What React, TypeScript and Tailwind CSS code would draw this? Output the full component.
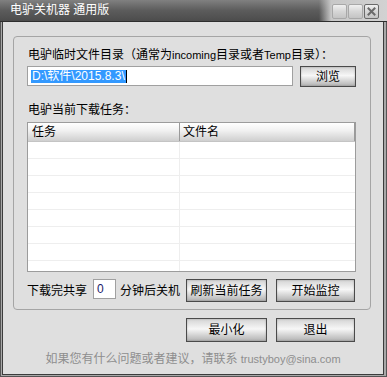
import React from "react";

const btn =
  "border border-[#4a4a4a] bg-[linear-gradient(to_bottom,#d4d4d4,#f7f7f7_45%,#e4e4e4_60%,#b2b2b2)] shadow-[inset_0_0_2px_rgba(0,0,0,0.25)] text-[12px] text-black flex items-center justify-center leading-none";

function TitleBtn({ close }: { close?: boolean }) {
  return (
    <div
      className={
        "w-[15px] h-[15px] rounded-[2px] border bg-[linear-gradient(to_bottom,#f0f0f0,#d6d6d6_50%,#c4c4c4)] flex items-center justify-center " +
        (close ? "border-[#6a6a6a]" : "border-[#a8a8a8]")
      }
    >
      {close && (
        <svg width="9" height="9" viewBox="0 0 9 9">
          <path d="M1.5 1.5 L7.5 7.5 M7.5 1.5 L1.5 7.5" stroke="#6a6a6a" strokeWidth="2" strokeLinecap="square" />
        </svg>
      )}
    </div>
  );
}

export default function App() {
  const rows = Array.from({ length: 8 });
  return (
    <div className="w-[387px] h-[377px] flex flex-col overflow-hidden bg-[#404040] font-['Liberation_Sans','Noto_Sans_CJK_SC',sans-serif]">
      {/* title bar */}
      <div className="h-[22px] flex shrink-0 bg-[linear-gradient(to_bottom,#808080,#5c5c5c_50%,#4c4c4c)] border-b border-[#2e2e2e]">
        <div className="flex-1 pl-[10px] text-white text-[12px] leading-[21px]">电驴关机器 通用版</div>
        <div className="w-[68px] flex items-start pt-[4px] pl-[13px] gap-[1px] bg-[linear-gradient(to_right,rgba(200,200,200,0),#c8c8c8_18%,#d2d2d2)]">
          <TitleBtn />
          <TitleBtn />
          <TitleBtn close />
        </div>
      </div>
      {/* frame */}
      <div className="flex-1 flex flex-col border-l border-r border-b border-[#555555]">
        <div className="flex-1 flex flex-col border-l border-r-2 border-b border-[#a8a8a8]">
          <div className="flex-1 flex flex-col border-l border-r border-b border-[#3c3c3c] bg-[#dfdfdf]">
            {/* group box */}
            <div className="mt-[14px] ml-[10px] w-[358px] h-[274px] border border-[#a5a5a5] rounded-[4px] pl-[13px] pt-[10px] flex flex-col">
              <div className="text-[12px] leading-[16px] text-black ml-[1px] whitespace-nowrap">
                电驴临时文件目录（通常为<span className="text-[11px]">incoming</span>目录或者<span className="text-[11px]">Temp</span>目录）：
              </div>
              <div className="mt-[3px] flex items-start gap-[7px]">
                <div className="w-[266px] h-[20px] bg-white border border-[#a0a0a0] pl-[3px] flex items-center">
                  <span className="bg-[#3399ff] text-white text-[12px] leading-[13px] px-[1px] whitespace-nowrap">D:\软件\2015.8.3\</span>
                  <span className="w-[1px] h-[13px] bg-black" />
                </div>
                <div className={btn + " w-[56px] h-[21px]"}>浏览</div>
              </div>
              <div className="mt-[15px] text-[12px] leading-[16px] text-black ml-[1px]">电驴当前下载任务：</div>
              <div className="mt-[4px] w-[329px] h-[150px] border border-[#9c9c9c] bg-white flex flex-col overflow-hidden">
                <div className="h-[19px] shrink-0 flex bg-[linear-gradient(to_bottom,#ffffff,#f2f2f2_40%,#cfcfcf)] border-b border-[#c4c4c4] text-[12px] leading-[19px] text-black">
                  <div className="w-[152px] border-r border-[#9a9a9a] pl-[4px]">任务</div>
                  <div className="flex-1 pl-[3px] border-r border-[#9a9a9a]">文件名</div>
                </div>
                {rows.map((_, i) => (
                  <div key={i} className="h-[17px] shrink-0 flex border-b border-[#eeeeee]">
                    <div className="w-[152px] border-r border-[#eeeeee]" />
                    <div className="flex-1" />
                  </div>
                ))}
              </div>
              <div className="mt-[7px] flex items-start">
                <div className="mt-[4px] text-[12px] leading-[16px] text-black whitespace-nowrap w-[66px]">下载完共享</div>
                <div className="w-[23px] h-[20px] bg-white border border-[#a0a0a0] pl-[3px] text-[12px] leading-[18px] text-[#1a1a6a]">0</div>
                <div className="mt-[4px] ml-[4px] text-[12px] leading-[16px] text-black whitespace-nowrap w-[66px]">分钟后关机</div>
                <div className={btn + " w-[81px] h-[23px]"}>刷新当前任务</div>
                <div className={btn + " ml-[9px] w-[79px] h-[23px]"}>开始监控</div>
              </div>
            </div>
            {/* bottom buttons */}
            <div className="mt-[8px] pl-[183px] flex gap-[9px]">
              <div className={btn + " w-[81px] h-[24px]"}>最小化</div>
              <div className={btn + " w-[79px] h-[24px]"}>退出</div>
            </div>
            <div className="mt-[9px] text-center text-[12px] leading-[16px] text-[#8e8e8e] whitespace-nowrap">
              如果您有什么问题或者建议，请联系 <span className="text-[11px]">trustyboy@sina.com</span>
            </div>
          </div>
        </div>
      </div>
    </div>
  );
}
